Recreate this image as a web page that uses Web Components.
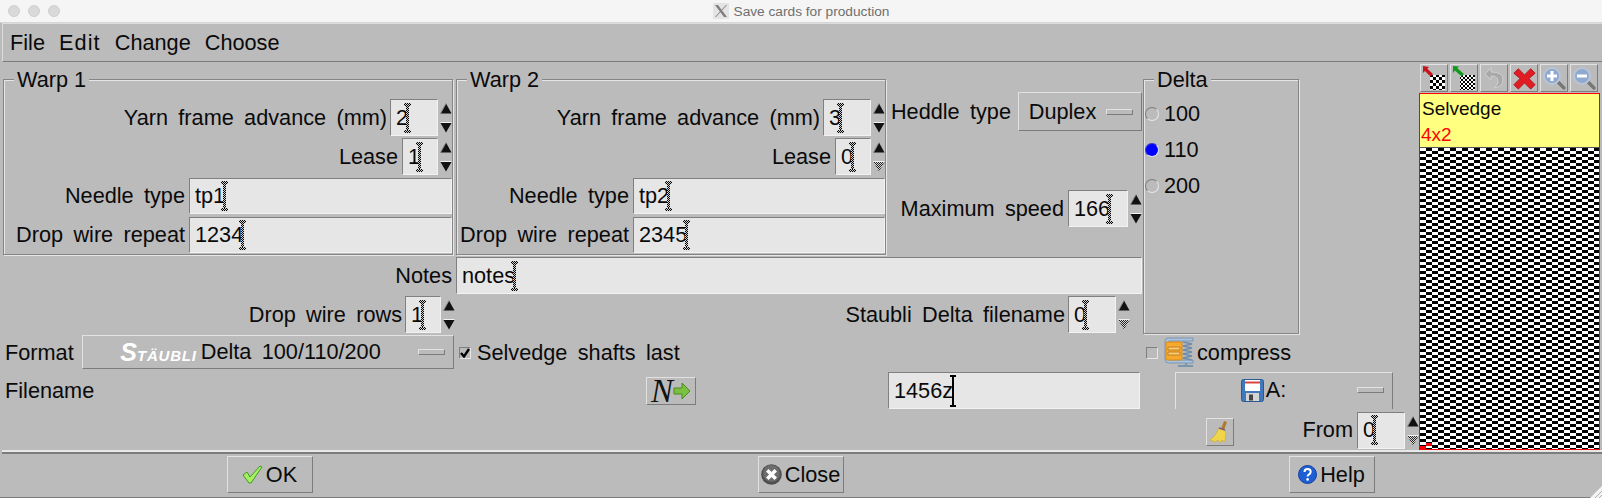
<!DOCTYPE html>
<html>
<head>
<meta charset="utf-8">
<title>Save cards for production</title>
<style>
  html, body { margin: 0; padding: 0; background: #bbbbbb; }
  body { font: 21.7px "Liberation Sans", Arial, sans-serif; word-spacing: 4.3px; color: #0a0a0a; overflow: hidden; }
</style>
</head>
<body>
<x-app></x-app>
<script>
// shared bits of style, these are all Tk widgets so the reliefs repeat a lot
const raised = "border: 1px solid; border-color: #e2e2e2 #7c7c7c #7c7c7c #e2e2e2; box-sizing: border-box;";

class XTitlebar extends HTMLElement {
  constructor() {
    super();
    this.attachShadow({ mode: "open" }).innerHTML = `
    <style>
      :host { display: grid; grid-template-columns: 1fr auto 1fr; height: 23px; background: #f5f5f5; border-bottom: 1px solid #d6d6d6; box-sizing: border-box; align-items: center; }
      .lights { display: flex; gap: 8px; padding-left: 8px; }
      .lights i { width: 12px; height: 12px; box-sizing: border-box; border-radius: 50%; background: #d9d9d9; border: 1px solid #cfcfcf; }
      .title { display: flex; justify-content: center; align-items: center; gap: 5px; font-size: 13.7px; word-spacing: 0; color: #6f6f6f; }
      svg { display: block; }
    </style>
    <div class="lights"><i></i><i></i><i></i></div>
    <div class="title">
      <svg width="16" height="16" viewBox="0 0 16 16"><rect width="16" height="16" fill="#e4e4e4"/><path d="M2 2 L5 2 L14 14 L11 14 Z" fill="#7d7d7d"/><path d="M13 2 L14 2 L3 14 L2 14 Z" fill="#7d7d7d"/></svg>
      <slot></slot>
    </div>`;
  }
}

class XMenubar extends HTMLElement {
  constructor() {
    super();
    this.attachShadow({ mode: "open" }).innerHTML = `
    <style>
      :host { display: flex; gap: 14px; height: 39px; margin-left: 2px; padding: 0 0 0 7px; align-items: center; box-sizing: border-box; border-left: 1px solid #dcdcdc; border-top: 1px solid #dcdcdc; border-bottom: 1px solid #7c7c7c; }
    </style>
    <slot></slot>`;
  }
}

class XGroup extends HTMLElement {
  constructor() {
    super();
    this.attachShadow({ mode: "open" }).innerHTML = `
    <style>
      :host { display: block; position: relative; box-sizing: border-box; border: 1px solid #858585; box-shadow: inset 1px 1px 0 #e6e6e6, 1px 1px 0 #e6e6e6; }
      .legend { position: absolute; top: -12px; left: 10px; padding: 0 3px; background: #bbbbbb; line-height: 24px; word-spacing: 0; }
    </style>
    <div class="legend"></div>
    <slot></slot>`;
    this.shadowRoot.querySelector(".legend").textContent = this.getAttribute("legend");
  }
}

class XEntry extends HTMLElement {
  constructor() {
    super();
    this.attachShadow({ mode: "open" }).innerHTML = `
    <style>
      :host { display: flex; align-items: center; box-sizing: border-box; height: 36px; padding-left: 5px; background: #e6e6e6; border: 1px solid; border-color: #808080 #f2f2f2 #f2f2f2 #808080; }
      .end { position: relative; display: inline-block; width: 0; height: 100%; }
      .cur { position: absolute; left: -2px; top: 50%; margin-top: -15px; width: 3px; height: 30px; background: repeating-conic-gradient(#000 0 25%, #d0d0d0 0 50%) 0 0 / 2px 2px; }
      .cur::before, .cur::after { content: ""; position: absolute; left: -2px; width: 7px; height: 3px; background: inherit; }
      .cur::before { top: 0; }
      .cur::after { bottom: 0; }
      :host([solid]) .cur, :host([solid]) .cur::before, :host([solid]) .cur::after { background: #000; }
      :host([solid]) .cur { width: 2px; left: -1px; margin-top: -16px; height: 32px; }
      :host([solid]) .cur::before, :host([solid]) .cur::after { height: 2px; left: -2px; width: 6px; }
    </style>
    <slot></slot><span class="end"><span class="cur"></span></span>`;
  }
}

class XSpin extends HTMLElement {
  constructor() {
    super();
    const up = `<svg width="12" height="11" viewBox="0 0 12 11"><path d="M6 0.5 L11.5 10.5 L0.5 10.5 Z" fill="#111"/><path d="M6 0.5 L0.5 10.5" stroke="#8a8a8a" fill="none"/></svg>`;
    const dark = `<svg width="12" height="11" viewBox="0 0 12 11"><path d="M0.5 1 L11.5 1 L6 10.5 Z" fill="#111"/><path d="M0.5 0.5 L11.5 0.5" stroke="#f2f2f2"/></svg>`;
    const pale = `<svg width="12" height="11" viewBox="0 0 12 11"><defs><pattern id="st" width="2" height="2" patternUnits="userSpaceOnUse"><rect width="2" height="2" fill="#d8d8d8"/><rect width="1" height="1" fill="#222"/><rect x="1" y="1" width="1" height="1" fill="#222"/></pattern></defs><path d="M0.5 1 L11.5 1 L6 10.5 Z" fill="url(#st)"/><path d="M0.5 0.5 L11.5 0.5" stroke="#f2f2f2"/></svg>`;
    this.attachShadow({ mode: "open" }).innerHTML = `
    <style>
      :host { display: flex; gap: 2px; height: 37px; }
      x-entry { height: 37px; width: var(--w, 48px); }
      .arrows { display: flex; flex-direction: column; justify-content: space-between; padding: 4px 0 3px; width: 12px; }
      svg { display: block; }
    </style>
    <x-entry><slot></slot></x-entry>
    <div class="arrows">${up}${this.hasAttribute("atmin") ? pale : dark}</div>`;
  }
}

class XOption extends HTMLElement {
  constructor() {
    super();
    this.attachShadow({ mode: "open" }).innerHTML = `
    <style>
      :host { display: flex; align-items: center; ${raised} padding-right: 8px; }
      .body { flex: 1; display: flex; justify-content: center; align-items: center; gap: 2px; }
      .mark { width: 27px; height: 6px; box-sizing: border-box; border: 1px solid; border-color: #e2e2e2 #7c7c7c #7c7c7c #e2e2e2; }
    </style>
    <div class="body"><slot></slot></div>
    <div class="mark"></div>`;
  }
}

class XTool extends HTMLElement {
  constructor() {
    super();
    this.attachShadow({ mode: "open" }).innerHTML = `
    <style>
      :host { display: flex; align-items: center; justify-content: center; ${raised} }
    </style>
    <slot></slot>`;
  }
}

class XRadio extends HTMLElement {
  constructor() {
    super();
    this.attachShadow({ mode: "open" }).innerHTML = `
    <style>
      :host { display: flex; align-items: center; gap: 5px; height: 36px; padding-left: 1px; }
      i { width: 14px; height: 14px; border-radius: 50%; box-sizing: border-box; border: 1px solid; border-color: #7f7f7f #e6e6e6 #e6e6e6 #7f7f7f; }
      :host([on]) i { background: #0000ff; border-color: #3a3ac8 #e6e6ff #e6e6ff #3a3ac8; }
    </style>
    <i></i><slot></slot>`;
  }
}

class XCheck extends HTMLElement {
  constructor() {
    super();
    this.attachShadow({ mode: "open" }).innerHTML = `
    <style>
      :host { display: flex; align-items: center; gap: 6px; }
      i { display: flex; width: 12px; height: 12px; box-sizing: border-box; border: 1px solid; border-color: #7f7f7f #e6e6e6 #e6e6e6 #7f7f7f; }
      svg { display: none; }
      :host([on]) svg { display: block; }
    </style>
    <i><svg width="10" height="10" viewBox="0 0 10 10"><path d="M1 5 L4 8.5 L9 1" fill="none" stroke="#000" stroke-width="2.4"/></svg></i><slot name="icon"></slot><slot></slot>`;
  }
}

class XPreview extends HTMLElement {
  constructor() {
    super();
    this.attachShadow({ mode: "open" }).innerHTML = `
    <style>
      :host { display: flex; flex-direction: column; position: relative; box-sizing: border-box; width: 181px; height: 357px; border: 1px solid #ff0000; word-spacing: 0; }
      .head { height: 54px; box-sizing: border-box; background: #ffff80; border-bottom: 1px solid #555; font-size: 19px; display: flex; flex-direction: column; padding: 2px 0 0 2px; }
      .head div { height: 26px; line-height: 26px; }
      .head .size { color: #ff0000; margin-left: -1px; }
      .cells { flex: 1; background: repeating-conic-gradient(#000 0 25%, #fff 0 50%) 0 0 / 12px 6px; }
      .mark { position: absolute; background: #ff0000; height: 3px; width: 6px; }
    </style>
    <div class="head"><div class="name"><slot name="name"></slot></div><div class="size"><slot name="size"></slot></div></div>
    <div class="cells"></div>
    <div class="mark" style="left:0;bottom:0"></div>
    <div class="mark" style="left:6px;bottom:3px"></div>`;
  }
}

class XWarp extends HTMLElement {
  constructor() {
    super();
    const a = (n) => this.getAttribute(n);
    this.attachShadow({ mode: "open" }).innerHTML = `
    <style>
      :host { display: block; }
      x-group { height: 176px; padding: 19px 0 0; }
      .rows { display: grid; grid-auto-rows: 37px; row-gap: 2px; }
      .row { display: flex; justify-content: flex-end; align-items: center; gap: 4px; }
      x-entry { align-self: flex-end; }
      .row.top { gap: 3px; }
    </style>
    <x-group legend="${a("name")}">
      <div class="rows">
        <div class="row top"><span>Yarn frame advance (mm)</span><x-spin style="--w:48px">${a("advance")}</x-spin></div>
        <div class="row"><span>Lease</span><x-spin style="--w:36px" ${a("lease") === "0" ? "atmin" : ""}>${a("lease")}</x-spin></div>
        <div class="row"><span>Needle type</span><x-entry style="width:${a("entry")}px">${a("needle")}</x-entry></div>
        <div class="row"><span>Drop wire repeat</span><x-entry style="width:${a("entry")}px">${a("repeat")}</x-entry></div>
      </div>
    </x-group>`;
  }
}

class XApp extends HTMLElement {
  constructor() {
    super();
    const checker = (id, c) => `<defs><pattern id="${id}" width="${c * 2}" height="${c * 2}" patternUnits="userSpaceOnUse"><rect width="${c * 2}" height="${c * 2}" fill="#fff"/><rect width="${c}" height="${c}" fill="#000"/><rect x="${c}" y="${c}" width="${c}" height="${c}" fill="#000"/></pattern></defs>`;
    const magnifier = (sign) => `<svg width="26" height="26" viewBox="0 0 26 26"><path d="M16 16 L23 23" stroke="#777" stroke-width="3.4" stroke-linecap="round"/><circle cx="11" cy="11" r="8" fill="#8fa9cf" stroke="#b9c5d6" stroke-width="2"/>${sign}</svg>`;
    this.attachShadow({ mode: "open" }).innerHTML = `
    <style>
      :host { display: block; width: 1602px; height: 498px; background: #bbbbbb; overflow: hidden; position: relative; }
      .main { display: flex; height: 388px; }
      .left { width: 1419px; padding: 17px 0 0 3px; box-sizing: border-box; }
      .right { display: flex; flex-direction: column; gap: 1px; padding-top: 2px; }
      .tools { display: flex; gap: 2px; padding-left: 1px; }
      .tools x-tool { width: 28px; height: 28px; }
      .upper { display: flex; height: 256px; }
      .fields { width: 1140px; }
      .warps { display: flex; height: 178px; }
      .warps x-warp:nth-child(1) { width: 450px; margin-right: 3px; }
      .warps x-warp:nth-child(2) { width: 430px; }
      .machine { width: 257px; padding-top: 13px; box-sizing: border-box; }
      .machine .r { display: flex; justify-content: flex-end; align-items: center; gap: 7px; padding-right: 1px; }
      .machine .r + .r { gap: 4px; margin-top: 59px; }
      .machine x-option { width: 124px; height: 39px; }
      .notes { display: grid; grid-template-columns: 449px 686px; column-gap: 4px; align-items: start; height: 39px; }
      .notes span { text-align: right; line-height: 37px; }
      .notes x-entry { height: 37px; }
      .pair { display: grid; grid-template-columns: 452px 675px; height: 37px; }
      .pair > div { display: flex; justify-content: flex-end; align-items: center; gap: 3px; }
      .delta { width: 156px; height: 255px; padding-top: 16px; }
      .format { display: grid; grid-template-columns: 79px 372px 692px 1fr; align-items: center; height: 34px; }
      .format x-check { padding-top: 2px; }
      .format x-check:first-of-type { padding-left: 5px; }
      .format x-option { height: 34px; }
      .file { display: grid; grid-template-columns: 643px 50px 192px 252px 35px 218px; align-items: center; height: 37px; margin-top: 3px; }
      .file x-tool { grid-column: 2; height: 28px; }
      .file x-entry { grid-column: 4; height: 37px; }
      .file x-option { grid-column: 6; height: 37px; border-bottom: none; padding-bottom: 2px; }
      .from { display: grid; grid-template-columns: 1203px 28px 1fr; align-items: center; height: 38px; margin-top: 2px; }
      .from x-tool { grid-column: 2; height: 28px; margin-top: 4px; }
      .from .f { grid-column: 3; display: flex; justify-content: flex-end; align-items: center; gap: 4px; }
      .sep { height: 4px; margin-left: 2px; box-sizing: border-box; border-top: 2px solid #e8e8e8; border-bottom: 2px solid #7c7c7c; }
      .bottom { display: grid; grid-template-columns: repeat(3, 531px); padding: 2px 0 0 4px; height: 44px; box-sizing: border-box; border-bottom: 1px solid #7c7c7c; justify-items: center; align-items: start; }
      .bottom x-tool { width: 86px; height: 37px; gap: 3px; }
      .grip { position: absolute; right: 0; bottom: 0; width: 12px; height: 12px; }
      svg { display: block; }
      .brand { color: #fff; font: italic bold 15px "Liberation Sans", Arial, sans-serif; word-spacing: 0; margin-right: 2px; letter-spacing: .8px; }
      .brand b { font-size: 25px; letter-spacing: 0; }
      .nn { font: italic 33px "Liberation Serif", serif; color: #111; line-height: 26px; }
    </style>
    <x-titlebar>Save cards for production</x-titlebar>
    <x-menubar><span>File</span><span style="letter-spacing:1.1px">Edit</span><span>Change</span><span>Choose</span></x-menubar>
    <div class="main">
      <div class="left">
        <div class="upper">
          <div class="fields">
            <div class="warps">
              <x-warp name="Warp 1" advance="2" lease="1" needle="tp1" repeat="1234" entry="263"></x-warp>
              <x-warp name="Warp 2" advance="3" lease="0" needle="tp2" repeat="2345" entry="252"></x-warp>
              <div class="machine">
                <div class="r"><span>Heddle type</span><x-option>Duplex</x-option></div>
                <div class="r"><span>Maximum speed</span><x-spin style="--w:60px">166</x-spin></div>
              </div>
            </div>
            <div class="notes"><span>Notes</span><x-entry>notes</x-entry></div>
            <div class="pair">
              <div><span>Drop wire rows</span><x-spin style="--w:36px">1</x-spin></div>
              <div><span>Staubli Delta filename</span><x-spin style="--w:48px" atmin>0</x-spin></div>
            </div>
          </div>
          <x-group class="delta" legend="Delta">
            <x-radio>100</x-radio>
            <x-radio on>110</x-radio>
            <x-radio>200</x-radio>
          </x-group>
        </div>
        <div class="format">
          <span style="padding:1px 0 0 2px">Format</span>
          <x-option><span class="brand"><b>S</b>TÄUBLI</span>Delta 100/110/200</x-option>
          <x-check on>Selvedge shafts last</x-check>
          <x-check>
            <svg slot="icon" width="30" height="30" viewBox="0 0 30 30" style="margin:-2px -3px 0 0">
              <path d="M1 4 Q1 1 5 1 L29 1 L29 4 L5 4 L5 23 L29 23 L29 26 L5 26 Q1 26 1 23 Z" fill="#a9c3dc" stroke="#6f8cab" stroke-width=".8"/>
              <rect x="2" y="5" width="16" height="18" rx="1" fill="#f7a92e" stroke="#d88a16"/>
              <path d="M4 10 H16 V13 H4 Z M4 15 H16 V18 H4 Z" fill="#fbcb70" stroke="#b97c1e" stroke-width=".9"/>
              <path d="M19 5 L28 7 L19 9 L28 11 L19 13 L28 15 L19 17 L28 19 L19 21 L28 23" fill="none" stroke="#6f8cab" stroke-width="1.3"/>
              <path d="M22 26 V28 M14 29 H29" stroke="#7c95af" stroke-width="2.2"/>
            </svg>compress</x-check>
        </div>
        <div class="file">
          <span style="padding-left:2px;grid-column:1">Filename</span>
          <x-tool><span class="nn">N</span><svg width="18" height="18" viewBox="0 0 18 18"><path d="M1 6 H9 V1 L17 9 L9 17 V12 H1 Z" fill="#7ac143" stroke="#4d8a1c"/></svg></x-tool>
          <x-entry solid>1456z</x-entry>
          <x-option>
            <svg width="23" height="23" viewBox="0 0 23 23"><rect x=".5" y=".5" width="22" height="22" rx="2" fill="#3f78bd" stroke="#2a5a96"/><rect x="4" y="1" width="15" height="11" fill="#fff"/><rect x="4" y="2.5" width="15" height="2" fill="#d8453a"/><rect x="5" y="14" width="13" height="8" fill="#d4d4d4"/><rect x="8" y="15.5" width="4" height="6" fill="#444"/></svg><span style="margin-right:6px">A:</span>
          </x-option>
        </div>
        <div class="from">
          <x-tool>
            <svg width="22" height="24" viewBox="0 0 22 24"><path d="M15 1 L18 2 L15 10 L12 9 Z" fill="#b17a27"/><path d="M10 8 L16 10 L17 14 L16 22 L13 20 L11 23 L9 20 L6 22 L4 21 L1 20 Q7 16 10 8 Z" fill="#f0d54a" stroke="#c9a72a" stroke-width=".6"/><path d="M10 8 L16 10" stroke="#7c5a8a" stroke-width="1.6"/></svg>
          </x-tool>
          <div class="f"><span>From</span><x-spin style="--w:48px" atmin>0</x-spin></div>
        </div>
      </div>
      <div class="right">
        <div class="tools">
          <x-tool>
            <svg width="26" height="26" viewBox="0 0 26 26">${checker("ca", 3)}<rect x="9" y="10" width="15" height="15" fill="url(#ca)"/><path d="M2 1 L8 2 L6.3 3.7 L12 9 L9.5 11.5 L4 6 L2 8 Z" fill="#c4141c"/></svg>
          </x-tool>
          <x-tool>
            <svg width="26" height="26" viewBox="0 0 26 26">${checker("cb", 2)}<rect x="9" y="10" width="15" height="15" fill="url(#cb)"/><path d="M2 1 L8 1.5 L6.3 3.3 L13 9 L10.5 11.5 L4 5.5 L2 8 Z" fill="#0f9a1e"/></svg>
          </x-tool>
          <x-tool>
            <svg width="26" height="26" viewBox="0 0 26 26"><path d="M10 3 L4 9 L10 15 V11 Q18 11 17 18 Q16 21 13 23 Q22 22 22 14 Q22 7 10 7 Z" fill="#a9a9a9" stroke="#cfcfcf"/></svg>
          </x-tool>
          <x-tool>
            <svg width="23" height="23" viewBox="0 0 26 26"><path d="M6 2 L13 9 L20 2 L25 7 L18 13 L25 20 L20 25 L13 18 L6 25 L1 20 L8 13 L1 7 Z" fill="#e11c22" stroke="#a81318"/></svg>
          </x-tool>
          <x-tool>${magnifier('<path d="M6 11 H16 M11 6 V16" stroke="#fff" stroke-width="3"/>')}</x-tool>
          <x-tool>${magnifier('<path d="M6 11 H16" stroke="#fff" stroke-width="3"/>')}</x-tool>
        </div>
        <x-preview><span slot="name">Selvedge</span><span slot="size">4x2</span></x-preview>
      </div>
    </div>
    <div class="sep"></div>
    <div class="bottom">
      <x-tool>
        <svg width="21" height="19" viewBox="0 0 21 19"><path d="M1 10 L5 7 L8 12 L18 1 L20 2 L9 18 L7 18 Z" fill="#a6ef5e" stroke="#3f9a28"/></svg>OK
      </x-tool>
      <x-tool>
        <svg width="21" height="21" viewBox="0 0 20 20"><circle cx="10" cy="10" r="9.8" fill="#4f4f4f"/><circle cx="10" cy="9" r="8" fill="#6d6d6d"/><path d="M6 6 L14 14 M14 6 L6 14" stroke="#fff" stroke-width="3.4"/></svg>Close
      </x-tool>
      <x-tool>
        <svg width="19" height="19" viewBox="0 0 19 19"><circle cx="9.5" cy="9.5" r="9" fill="#1f5fd6" stroke="#0f3f9e"/><path d="M6.5 7 Q6.5 4 9.5 4 Q12.7 4 12.7 6.8 Q12.7 8.5 10.8 9.5 Q9.6 10.2 9.6 11.5" fill="none" stroke="#fff" stroke-width="2"/><circle cx="9.6" cy="14.4" r="1.3" fill="#fff"/></svg>Help
      </x-tool>
    </div>
    <svg class="grip" viewBox="0 0 12 12"><path d="M0 12 L12 0 V12 Z" fill="#f4f4f4"/><path d="M5 12 L12 5 M9 12 L12 9" stroke="#b0b0b0"/></svg>`;
  }
}

// children first so that upgrades run from the inside out
customElements.define("x-titlebar", XTitlebar);
customElements.define("x-menubar", XMenubar);
customElements.define("x-group", XGroup);
customElements.define("x-entry", XEntry);
customElements.define("x-spin", XSpin);
customElements.define("x-option", XOption);
customElements.define("x-tool", XTool);
customElements.define("x-radio", XRadio);
customElements.define("x-check", XCheck);
customElements.define("x-preview", XPreview);
customElements.define("x-warp", XWarp);
customElements.define("x-app", XApp);
</script>
</body>
</html>
